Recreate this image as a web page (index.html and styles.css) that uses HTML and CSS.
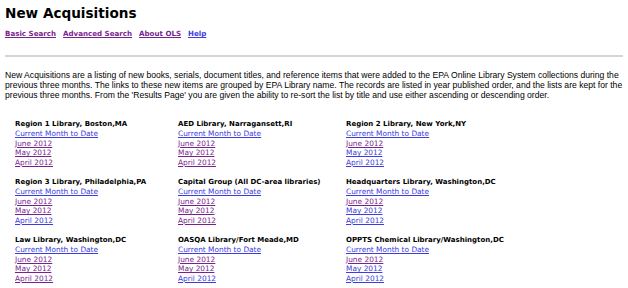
FILE: index.html
```html
<!DOCTYPE html>
<html>
  <head>
    <meta charset="utf-8">
    <title>New Acquisitions</title>
    <link rel="stylesheet" href="styles.css">
  </head>
  <body>
    <h1>New Acquisitions</h1>
    <div class="nav">
      <a class="seen" href="#">Basic Search</a>
      <a class="seen" href="#">Advanced Search</a>
      <a class="seen" href="#">About OLS</a>
      <a href="#">Help</a>
    </div>
    <hr>
    <p class="intro">New Acquisitions are a listing of new books, serials, document titles, and reference items that were added to the EPA Online Library System collections during the previous three months. The links to these new items are grouped by EPA Library name. The records are listed in year published order, and the lists are kept for the previous three months. From the 'Results Page' you are given the ability to re-sort the list by title and use either ascending or descending order.</p>

    <div class="libraries">
      <div class="library">
        <h2>Region 1 Library, Boston,MA</h2>
        <a href="#">Current Month to Date</a>
        <a class="seen" href="#">June 2012</a>
        <a class="seen" href="#">May 2012</a>
        <a class="seen" href="#">April 2012</a>
      </div>
      <div class="library">
        <h2>AED Library, Narragansett,RI</h2>
        <a href="#">Current Month to Date</a>
        <a class="seen" href="#">June 2012</a>
        <a class="seen" href="#">May 2012</a>
        <a class="seen" href="#">April 2012</a>
      </div>
      <div class="library">
        <h2>Region 2 Library, New York,NY</h2>
        <a href="#">Current Month to Date</a>
        <a class="seen" href="#">June 2012</a>
        <a href="#">May 2012</a>
        <a href="#">April 2012</a>
      </div>

      <div class="library">
        <h2>Region 3 Library, Philadelphia,PA</h2>
        <a href="#">Current Month to Date</a>
        <a class="seen" href="#">June 2012</a>
        <a class="seen" href="#">May 2012</a>
        <a href="#">April 2012</a>
      </div>
      <div class="library">
        <h2>Capital Group (All DC-area libraries)</h2>
        <a href="#">Current Month to Date</a>
        <a class="seen" href="#">June 2012</a>
        <a class="seen" href="#">May 2012</a>
        <a class="seen" href="#">April 2012</a>
      </div>
      <div class="library">
        <h2>Headquarters Library, Washington,DC</h2>
        <a href="#">Current Month to Date</a>
        <a class="seen" href="#">June 2012</a>
        <a href="#">May 2012</a>
        <a href="#">April 2012</a>
      </div>

      <div class="library">
        <h2>Law Library, Washington,DC</h2>
        <a href="#">Current Month to Date</a>
        <a class="seen" href="#">June 2012</a>
        <a class="seen" href="#">May 2012</a>
        <a class="seen" href="#">April 2012</a>
      </div>
      <div class="library">
        <h2>OASQA Library/Fort Meade,MD</h2>
        <a href="#">Current Month to Date</a>
        <a class="seen" href="#">June 2012</a>
        <a class="seen" href="#">May 2012</a>
        <a href="#">April 2012</a>
      </div>
      <div class="library">
        <h2>OPPTS Chemical Library/Washington,DC</h2>
        <a href="#">Current Month to Date</a>
        <a class="seen" href="#">June 2012</a>
        <a href="#">May 2012</a>
        <a href="#">April 2012</a>
      </div>
    </div>
  </body>
</html>
```

FILE: styles.css
```css
body {
  margin: 0;
  padding: 0 5px;
  background: #fff;
  color: #000;
  font-family: "DejaVu Sans", Verdana, sans-serif;
}

a {
  color: #3c3ce0;
}

a.seen {
  color: #7a1f8f;
}

h1 {
  margin: 5px 0 0;
  font-size: 13.6px;
  line-height: 16px;
  font-weight: bold;
}

.nav {
  display: flex;
  gap: 7px;
  margin-top: 8px;
  font-size: 7.1px;
  line-height: 9px;
  font-weight: bold;
}

hr {
  margin: 17px 0 0;
  border: 0;
  border-top: 2px solid #d4d4d4;
  height: 0;
}

.intro {
  margin: 13px 0 0;
  font-family: "Liberation Sans", Arial, sans-serif;
  font-size: 8.6px;
  line-height: 10px;
}

.libraries {
  display: grid;
  grid-template-columns: 163px 168px 1fr;
  row-gap: 11px;
  margin-top: 20px;
  padding-left: 10px;
}

.library {
  display: flex;
  flex-direction: column;
  align-items: flex-start;
  font-size: 7.4px;
  line-height: 9.4px;
}

.library h2 {
  margin: 0;
  font-size: 7px;
  font-weight: bold;
}
```
